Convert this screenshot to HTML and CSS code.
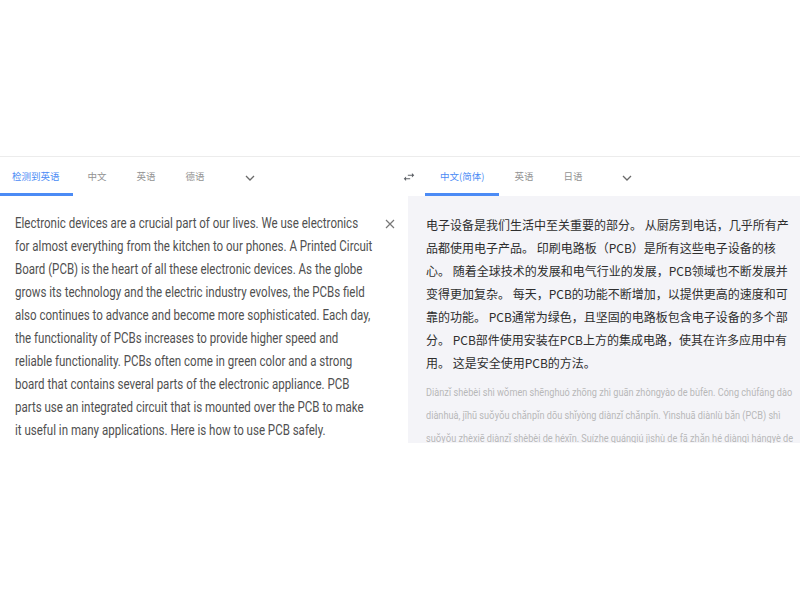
FILE: index.html
```html
<!DOCTYPE html>
<html lang="zh">
<head>
<meta charset="utf-8">
<title>翻译</title>
<link rel="stylesheet" href="styles.css">
</head>
<body>
<div class="app">
  <div class="bar">
    <div class="langs src">
      <div class="tab first active">检测到英语</div>
      <div class="tab">中文</div>
      <div class="tab">英语</div>
      <div class="tab">德语</div>
      <span class="chev"><svg width="12" height="12" viewBox="0 0 12 12"><polyline points="2,4 6,8 10,4" fill="none" stroke="#6a6a6a" stroke-width="1.3"/></svg></span>
    </div>
    <div class="swap"><svg width="14" height="14" viewBox="0 0 24 24"><path d="M6.99 11L3 15l3.99 4v-3H14v-2H6.99v-3zM21 9l-4-4v3h-7v2h7v3l4-4z" fill="#5f6368"/></svg></div>
    <div class="langs dst">
      <div class="tab active">中文(简体)</div>
      <div class="tab">英语</div>
      <div class="tab">日语</div>
      <span class="chev"><svg width="12" height="12" viewBox="0 0 12 12"><polyline points="2,4 6,8 10,4" fill="none" stroke="#6a6a6a" stroke-width="1.3"/></svg></span>
    </div>
  </div>
  <div class="panes">
    <div class="src-pane">
      <div class="src-wrap">
        <p class="src-text">Electronic devices are a crucial part of our lives. We use electronics<br>
for almost everything from the kitchen to our phones. A Printed Circuit<br>
Board (PCB) is the heart of all these electronic devices. As the globe<br>
grows its technology and the electric industry evolves, the PCBs field<br>
also continues to advance and become more sophisticated. Each day,<br>
the functionality of PCBs increases to provide higher speed and<br>
reliable functionality. PCBs often come in green color and a strong<br>
board that contains several parts of the electronic appliance. PCB<br>
parts use an integrated circuit that is mounted over the PCB to make<br>
it useful in many applications. Here is how to use PCB safely.</p>
      </div>
      <button class="clear" aria-label="清除"><svg width="10" height="10" viewBox="0 0 10 10"><path d="M1 1L9 9M9 1L1 9" stroke="#777" stroke-width="1.2" fill="none"/></svg></button>
    </div>
    <div class="dst-pane">
      <p class="zh">电子设备是我们生活中至关重要的部分。 从厨房到电话，几乎所有产品都使用电子产品。 印刷电路板（PCB）是所有这些电子设备的核心。 随着全球技术的发展和电气行业的发展，PCB领域也不断发展并变得更加复杂。 每天，PCB的功能不断增加，以提供更高的速度和可靠的功能。 PCB通常为绿色，且坚固的电路板包含电子设备的多个部分。 PCB部件使用安装在PCB上方的集成电路，使其在许多应用中有用。 这是安全使用PCB的方法。</p>
      <p class="pinyin">Diànzǐ shèbèi shì wǒmen shēnghuó zhōng zhì guān zhòngyào de bùfèn. Cóng chúfáng dào diànhuà, jīhū suǒyǒu chǎnpǐn dōu shǐyòng diànzǐ chǎnpǐn. Yìnshuā diànlù bǎn (PCB) shì suǒyǒu zhèxiē diànzǐ shèbèi de héxīn. Suízhe quánqiú jìshù de fā zhǎn hé diànqì hángyè de fāzhǎn, PCB lǐngyù yě bùduàn fāzhǎn bìng biàn dé gèng jiā fùzá.</p>
    </div>
  </div>
</div>
</body>
</html>
```

FILE: styles.css
```css
body {
  margin: 0;
  background: #ffffff;
  font-family: Roboto, "Noto Sans CJK SC", sans-serif;
}

.app {
  padding-top: 156px;
}

.bar {
  display: flex;
  height: 39px;
  border-top: 1px solid #ececec;
}

.langs {
  display: flex;
  align-items: stretch;
}

.src {
  width: 393px;
}

.tab {
  display: flex;
  align-items: center;
  padding: 2px 15px 0;
  font-family: "Noto Sans CJK SC", sans-serif;
  font-size: 9.5px;
  color: #929292;
  border-bottom: 3px solid transparent;
  white-space: nowrap;
}

.tab.first {
  padding-left: 12px;
  padding-right: 13px;
}

.tab.active {
  color: #4b8bf5;
  border-bottom-color: #4b8bf5;
}

.chev {
  display: flex;
  align-items: center;
  width: 12px;
  margin-left: 24px;
  padding-top: 2px;
}

.swap {
  width: 32px;
  display: flex;
  align-items: center;
  justify-content: center;
}

.panes {
  display: flex;
}

.src-pane {
  width: 408px;
  box-sizing: border-box;
  padding: 15.5px 0 0 15px;
  display: flex;
  align-items: flex-start;
}

.src-wrap {
  width: 360px;
}

.src-text {
  margin: 0;
  width: 455px;
  transform: scaleX(0.823);
  transform-origin: 0 0;
  font-size: 14px;
  line-height: 23px;
  color: #505050;
}

.clear {
  margin: 7.5px 0 0 10px;
  width: 10px;
  height: 10px;
  padding: 0;
  border: 0;
  background: none;
  display: flex;
}

.dst-pane {
  flex: 1;
  height: 247px;
  overflow: hidden;
  box-sizing: border-box;
  padding: 16.5px 10px 0 18px;
  background: #f4f4f8;
}

.zh {
  margin: 0;
  font-family: "Noto Sans CJK SC", sans-serif;
  font-size: 12px;
  line-height: 23px;
  color: #2e2e2e;
}

.pinyin {
  margin: 7px 0 0;
  width: 402px;
  transform: scaleX(0.915);
  transform-origin: 0 0;
  font-size: 10px;
  line-height: 23px;
  color: #b8b8b8;
}
```
